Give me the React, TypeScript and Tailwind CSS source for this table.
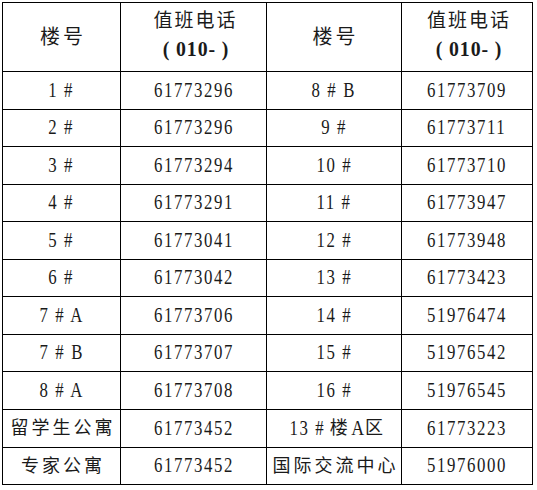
const rows: [string, string, string, string][] = [
  ['1 #', '61773296', '8 # B', '61773709'],
  ['2 #', '61773296', '9 #', '61773711'],
  ['3 #', '61773294', '10 #', '61773710'],
  ['4 #', '61773291', '11 #', '61773947'],
  ['5 #', '61773041', '12 #', '61773948'],
  ['6 #', '61773042', '13 #', '61773423'],
  ['7 # A', '61773706', '14 #', '51976474'],
  ['7 # B', '61773707', '15 #', '51976542'],
  ['8 # A', '61773708', '16 #', '51976545'],
  ['留学生公寓', '61773452', '13#楼A区', '61773223'],
  ['专家公寓', '61773452', '国际交流中心', '51976000'],
];

const heights = ['h-[38px]', 'h-[37px]', 'h-[38px]', 'h-[37px]', 'h-[38px]', 'h-[37px]', 'h-[38px]', 'h-[37px]', 'h-[38px]', 'h-[38px]', 'h-[37px]'];

const isCjk = (s: string) => /[\u4e00-\u9fff]/.test(s);

function Cell({ children, className = '' }: { children: React.ReactNode; className?: string }) {
  return (
    <div className={`flex items-center justify-center border-r border-b border-black ${className}`}>
      {children}
    </div>
  );
}

function Header() {
  return (
    <div className="grid h-[69px] grid-cols-[118px_146px_135px_131px]">
      {[0, 1].map((i) => (
        <div key={i} className="contents">
          <Cell className="pl-[3px] text-[20px] tracking-[3px]">楼号</Cell>
          <Cell className="flex-col justify-start pl-[4px]">
            <span className="mt-[4px] block h-[28px] text-[19px] leading-[28px] tracking-[2px]">值班电话</span>
            <span className="block h-[28px] scale-x-[0.9] text-[22px] font-bold leading-[28px] tracking-[1px]">( 010- )</span>
          </Cell>
        </div>
      ))}
    </div>
  );
}

function Mixed() {
  return (
    <span className="flex items-center whitespace-nowrap">
      <span className="inline-block scale-x-[0.8] text-[21px] tracking-[2px]">13 #</span>
      <span className="text-[18px] tracking-[2px]">楼</span>
      <span className="inline-block scale-x-[0.85] text-[21px]">A</span>
      <span className="text-[18px]">区</span>
    </span>
  );
}

export default function App() {
  return (
    <div className="min-h-[490px] w-[537px] bg-white font-['Liberation_Serif','Noto_Sans_CJK_SC',serif] text-[#1a1a1a]">
      <div className="ml-[2px] mt-[2px] w-[531px] border-l border-t border-black">
        <Header />
        {rows.map((r, i) => (
          <div key={i} className={`grid grid-cols-[118px_146px_135px_131px] ${heights[i]}`}>
            {r.map((t, j) =>
              t.includes('楼') ? (
                <Cell key={j}>
                  <Mixed />
                </Cell>
              ) : isCjk(t) ? (
                <Cell key={j} className="text-[18px] tracking-[3px]">
                  <span className="pl-[3px]">{t}</span>
                </Cell>
              ) : (
                <Cell key={j} className="text-[21px] tracking-[2px]">
                  <span className="inline-block scale-x-[0.8] whitespace-nowrap">{t}</span>
                </Cell>
              ),
            )}
          </div>
        ))}
      </div>
    </div>
  );
}
